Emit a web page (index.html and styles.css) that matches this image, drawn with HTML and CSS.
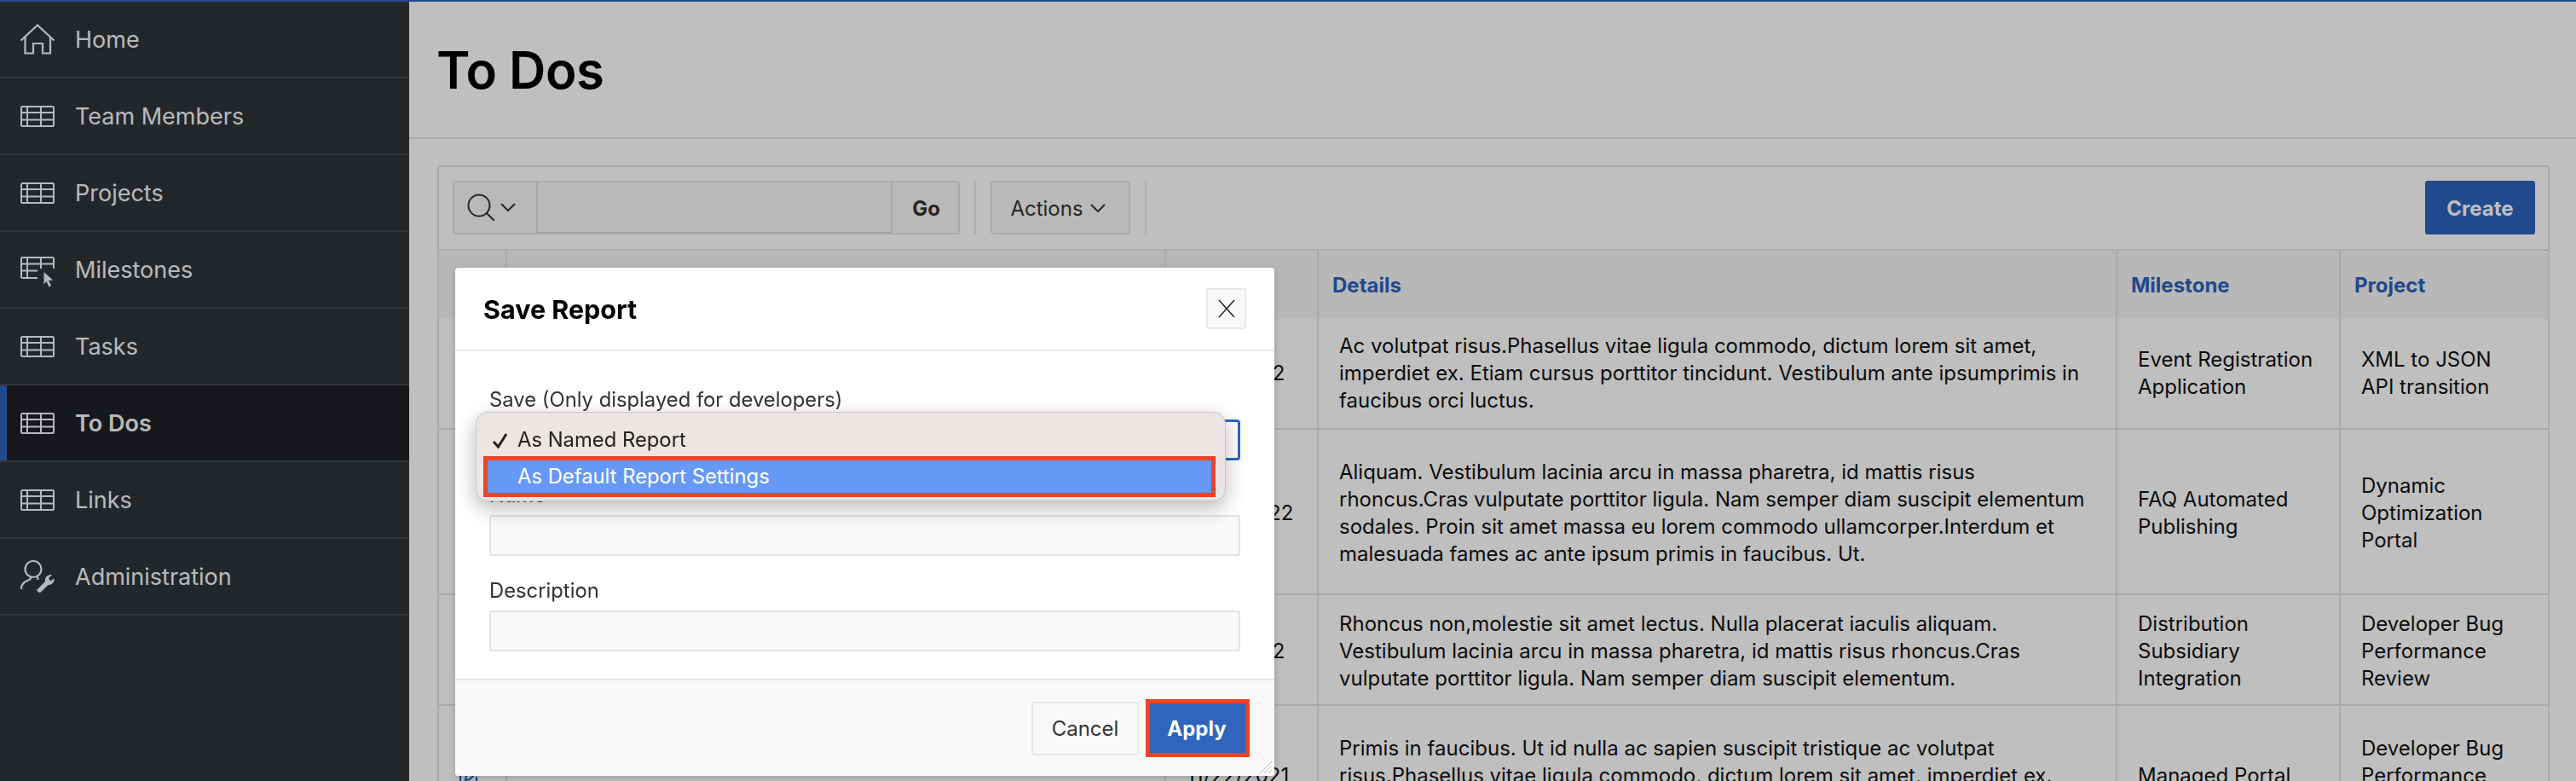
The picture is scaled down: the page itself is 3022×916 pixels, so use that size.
FILE: index.html
```html
<!DOCTYPE html>
<html lang="en">

<head>
    <meta charset="UTF-8">
    <meta name="viewport" content="width=device-width, initial-scale=1.0">
    <link rel="stylesheet" href="styles.css">
    <title>To Dos</title>
</head>

<body>
    <svg class="icon-defs" width="0" height="0">
        <symbol id="i-table" viewBox="0 0 40 25">
            <rect x="1" y="1" width="38" height="23" rx="1.500" fill="none" stroke="currentColor" stroke-width="2"/>
            <path d="M1 8H39M1 16.500H39M8 1V24M24 1V24" fill="none" stroke="currentColor" stroke-width="2"/>
        </symbol>
    </svg>

    <div class="page">
        <nav class="side">
            <a class="nav-item">
                <svg class="nav-icon" viewBox="0 0 40 36"><path d="M0.500 19.500L20 1.500L39.500 19.500M5.500 15V34.500H15V23H26V34.500H35V15" fill="none" stroke="currentColor" stroke-width="2.200"/></svg>
                <span>Home</span>
            </a>
            <a class="nav-item"><svg class="nav-icon tbl"><use href="#i-table"/></svg><span>Team Members</span></a>
            <a class="nav-item"><svg class="nav-icon tbl"><use href="#i-table"/></svg><span>Projects</span></a>
            <a class="nav-item">
                <svg class="nav-icon" viewBox="0 -3 40 36">
                    <path d="M20 25H2.500Q1 25 1 23.500V2.500Q1 1 2.500 1H37.500Q39 1 39 2.500V14M1 8.500H39M1 16.500H20M8 1V25M24 1V14" fill="none" stroke="currentColor" stroke-width="2"/>
                    <path d="M27.500 18L38 27.500L33 28L36 34L33.500 35.500L30.500 29L27.500 32.500Z" fill="currentColor"/>
                </svg>
                <span>Milestones</span>
            </a>
            <a class="nav-item"><svg class="nav-icon tbl"><use href="#i-table"/></svg><span>Tasks</span></a>
            <a class="nav-item active"><svg class="nav-icon tbl"><use href="#i-table"/></svg><span>To Dos</span></a>
            <a class="nav-item"><svg class="nav-icon tbl"><use href="#i-table"/></svg><span>Links</span></a>
            <a class="nav-item">
                <svg class="nav-icon admin" viewBox="0 0 40 38">
                    <circle cx="15" cy="10.500" r="9.500" fill="none" stroke="currentColor" stroke-width="2.200"/>
                    <path d="M12 19.500V21.500C10 25 1 24 1 34M20 19.500L20.500 23" fill="none" stroke="currentColor" stroke-width="2.200"/>
                    <path d="M20 34L29 25C28 21 31 17 36 17L37 17.500L33 21L35 24.500L39.500 21.500C40.500 26 36 29.500 32.500 29L24 37.500C22 39 18 36 20 34Z" fill="currentColor"/>
                </svg>
                <span>Administration</span>
            </a>
        </nav>

        <main class="content">
            <h1 class="page-title">To Dos</h1>
            <div class="body-wrap">
                <section class="report">
                    <div class="toolbar">
                        <div class="search-group">
                            <span class="search-btn">
                                <svg class="search-icon" viewBox="0 0 32 32"><circle cx="14" cy="14" r="12.500" fill="none" stroke="currentColor" stroke-width="2"/><path d="M23 23L32 32" stroke="currentColor" stroke-width="2"/></svg>
                                <svg class="chev" viewBox="0 0 18 10"><path d="M1 1L9 9L17 1" fill="none" stroke="currentColor" stroke-width="2"/></svg>
                            </span>
                            <span class="search-input"></span>
                            <span class="go-btn">Go</span>
                        </div>
                        <span class="tool-sep"></span>
                        <span class="actions-btn">Actions <svg class="chev" viewBox="0 0 18 10"><path d="M1 1L9 9L17 1" fill="none" stroke="currentColor" stroke-width="2"/></svg></span>
                        <span class="tool-sep"></span>
                        <span class="create-btn">Create</span>
                    </div>

                    <table class="grid">
                        <colgroup>
                            <col class="c-edit"><col class="c-title"><col class="c-date"><col class="c-details"><col class="c-mile"><col class="c-proj">
                        </colgroup>
                        <thead>
                            <tr>
                                <th></th>
                                <th>Title</th>
                                <th>Due</th>
                                <th>Details</th>
                                <th>Milestone</th>
                                <th>Project</th>
                            </tr>
                        </thead>
                        <tbody>
                            <tr class="r1">
                                <td></td>
                                <td></td>
                                <td>1/22/2022</td>
                                <td>Ac volutpat risus.Phasellus vitae ligula commodo, dictum lorem sit amet, imperdiet ex. Etiam cursus porttitor tincidunt. Vestibulum ante ipsumprimis in faucibus orci luctus.</td>
                                <td>Event Registration Application</td>
                                <td>XML to JSON API transition</td>
                            </tr>
                            <tr class="r2">
                                <td></td>
                                <td></td>
                                <td>11/29/2022</td>
                                <td>Aliquam. Vestibulum lacinia arcu in massa pharetra, id mattis risus rhoncus.Cras vulputate porttitor ligula. Nam semper diam suscipit elementum sodales. Proin sit amet massa eu lorem commodo ullamcorper.Interdum et malesuada fames ac ante ipsum primis in faucibus. Ut.</td>
                                <td>FAQ Automated Publishing</td>
                                <td>Dynamic Optimization Portal</td>
                            </tr>
                            <tr class="r3">
                                <td></td>
                                <td></td>
                                <td>1/22/2022</td>
                                <td>Rhoncus non,molestie sit amet lectus. Nulla placerat iaculis aliquam. Vestibulum lacinia arcu in massa pharetra, id mattis risus rhoncus.Cras vulputate porttitor ligula. Nam semper diam suscipit elementum.</td>
                                <td>Distribution Subsidiary Integration</td>
                                <td>Developer Bug Performance Review</td>
                            </tr>
                            <tr class="r4">
                                <td class="edit-cell"><svg class="edit-icon" viewBox="0 0 24 24"><path d="M20 13V23H1V4H11M7 17L8 12L19 1L23 5L12 16Z" fill="none" stroke="currentColor" stroke-width="2.200"/></svg></td>
                                <td></td>
                                <td>11/22/2021</td>
                                <td>Primis in faucibus. Ut id nulla ac sapien suscipit tristique ac volutpat risus.Phasellus vitae ligula commodo, dictum lorem sit amet, imperdiet ex. Etiam cursus porttitor tincidunt.</td>
                                <td>Managed Portal</td>
                                <td>Developer Bug Performance Review</td>
                            </tr>
                        </tbody>
                    </table>
                </section>
            </div>
        </main>
    </div>

    <div class="overlay"></div>

    <div class="dialog">
        <div class="dialog-head">
            <h2>Save Report</h2>
            <span class="close-btn"><svg viewBox="0 0 22 22"><path d="M2 1L20 21M20 1L2 21" stroke="currentColor" stroke-width="1.500"/></svg></span>
        </div>
        <div class="dialog-body">
            <div class="field field-save">
                <label>Save (Only displayed for developers)</label>
                <div class="fake-select"></div>
            </div>
            <div class="field">
                <label>Name</label>
                <div class="fake-input"></div>
            </div>
            <div class="field">
                <label>Description</label>
                <div class="fake-input"></div>
            </div>
        </div>
        <div class="dialog-foot">
            <span class="cancel-btn">Cancel</span>
            <span class="apply-btn">Apply</span>
            <svg class="grip" viewBox="0 0 16 16"><path d="M1 15L15 1M6 15L15 6M11 15L15 11" stroke="#bbb" stroke-width="1"/></svg>
        </div>
        <div class="popup">
            <div class="popup-row"><svg class="check" viewBox="0 0 20 20"><path d="M2 11L7.500 17L17 2" fill="none" stroke="currentColor" stroke-width="3"/></svg>As Named Report</div>
            <div class="popup-row picked">As Default Report Settings</div>
        </div>
    </div>
</body>

</html>
```
FILE: styles.css
```css
* {
    box-sizing: border-box;
}

html,
body {
    margin: 0;
    height: 100%;
    overflow: hidden;
}

body {
    font-family: Inter, "Liberation Sans", sans-serif;
    color: #111;
    background: #fff;
}

.icon-defs {
    position: absolute;
}

.page {
    display: flex;
    height: 916px;
    overflow: hidden;
    border-top: 2px solid #2c62bd;
}

/* side menu */
.side {
    width: 480px;
    flex: none;
    background: #303539;
}

.nav-item {
    display: flex;
    align-items: center;
    height: 90px;
    padding-left: 24px;
    border-bottom: 2px solid #44494d;
    color: #f6f7f8;
    font-size: 27px;
}

.nav-item.active {
    background: #1f2125;
    box-shadow: inset 8px 0 0 #2c62bd;
    font-weight: 600;
}

.nav-icon {
    width: 40px;
    height: 36px;
    margin-right: 24px;
    flex: none;
    overflow: visible;
}

.nav-icon.tbl {
    height: 25px;
}

.nav-icon.admin {
    height: 38px;
}

/* main area */
.content {
    flex: 1;
    min-width: 0;
    overflow: hidden;
}

.page-title {
    margin: 0;
    height: 161px;
    padding: 44px 0 0 32px;
    font-size: 60px;
    line-height: 72px;
    font-weight: 600;
    letter-spacing: -0.5px;
    border-bottom: 2px solid #e6e6e6;
    color: #000;
}

.body-wrap {
    padding: 31px 31px 0 33px;
}

.report {
    border: 2px solid #e3e3e3;
    border-bottom: none;
    border-radius: 3px 3px 0 0;
}

.toolbar {
    display: flex;
    align-items: center;
    height: 98px;
    padding: 16px 15px 18px 16px;
    border-bottom: 2px solid #e3e3e3;
}

.search-group {
    display: flex;
    width: 595px;
    height: 63px;
    border: 2px solid #e3e3e3;
    border-radius: 4px;
    background: #f7f7f7;
}

.search-btn {
    display: flex;
    align-items: center;
    gap: 7px;
    width: 96px;
    padding-left: 15px;
    color: #333;
}

.search-icon {
    width: 32px;
    height: 32px;
    flex: none;
}

.chev {
    width: 18px;
    height: 10px;
    flex: none;
}

.search-input {
    width: 418px;
    border-left: 2px solid #ddd;
    border-right: 2px solid #ddd;
    border-bottom: 1px solid #d4d4d4;
}

.go-btn {
    flex: 1;
    display: flex;
    align-items: center;
    justify-content: center;
    padding: 2px 0 0 2px;
    font-size: 24px;
    font-weight: 700;
    color: #333;
}

.tool-sep {
    width: 2px;
    height: 63px;
    background: #e8e8e8;
    margin: 0 17px;
}

.actions-btn {
    display: flex;
    align-items: center;
    justify-content: center;
    gap: 8px;
    width: 164px;
    height: 63px;
    padding: 2px 6px 0 0;
    border: 2px solid #e3e3e3;
    border-radius: 4px;
    background: #f7f7f7;
    font-size: 24px;
    color: #333;
}

.create-btn {
    display: flex;
    align-items: center;
    justify-content: center;
    width: 129px;
    height: 63px;
    padding-top: 2px;
    margin-left: auto;
    border-radius: 3px;
    background: #2c62bd;
    color: #fff;
    font-size: 24px;
    font-weight: 700;
}

/* report table */
.grid {
    width: 100%;
    border-collapse: collapse;
    table-layout: fixed;
    font-size: 24px;
    line-height: 32px;
}

.c-edit { width: 79px; }
.c-title { width: 773px; }
.c-date { width: 179px; }
.c-details { width: 937px; }
.c-mile { width: 262px; }

.grid th {
    height: 80px;
    padding: 1px 16px 0;
    text-align: left;
    background: #f6f6f6;
    color: #2c62bd;
    font-size: 24px;
    font-weight: 700;
    border-left: 2px solid #e3e3e3;
}

.grid th:first-child,
.grid td:first-child {
    border-left: none;
}

.grid td {
    padding: 16px 24px;
    vertical-align: middle;
    border-left: 2px solid #e3e3e3;
    border-top: 2px solid #e3e3e3;
}

.grid tbody tr:first-child td {
    border-top: none;
}

.r2 {
    height: 194px;
}

.grid .r2 td,
.grid .r3 td {
    padding-top: 18px;
    padding-bottom: 14px;
}

.r4 {
    height: 164px;
}

.edit-cell {
    color: #2c62bd;
}

.edit-icon {
    display: block;
    width: 24px;
    height: 24px;
}

/* dim layer and dialog */
.overlay {
    position: fixed;
    inset: 0;
    background: rgba(0, 0, 0, 0.25);
}

.dialog {
    position: absolute;
    left: 534px;
    top: 314px;
    width: 961px;
    height: 596px;
    display: flex;
    flex-direction: column;
    background: #fff;
    border-radius: 4px;
    box-shadow: 0 2px 8px rgba(0, 0, 0, 0.2);
}

.dialog-head {
    display: flex;
    align-items: center;
    justify-content: space-between;
    height: 98px;
    padding: 0 33px;
    border-bottom: 2px solid #e6e6e6;
}

.dialog-head h2 {
    margin: 0;
    font-size: 30.5px;
    font-weight: 700;
    color: #000;
}

.close-btn {
    display: flex;
    align-items: center;
    justify-content: center;
    width: 47px;
    height: 48px;
    border: 2px solid #e8e8e8;
    border-radius: 3px;
    background: #f9f9f9;
    color: #222;
}

.close-btn svg {
    width: 22px;
    height: 22px;
}

.dialog-body {
    flex: 1;
    padding: 41px 40px 0;
}

.field {
    margin-bottom: 25px;
}

.field label {
    display: block;
    height: 39px;
    font-size: 23.8px;
    line-height: 32px;
    color: #333;
}

.fake-select {
    height: 48px;
    border: 3px solid #2f65bd;
    border-radius: 4px;
}

.fake-input {
    height: 48px;
    border: 2px solid #e3e3e3;
    border-radius: 3px;
    background: #f9f9f9;
}

.dialog-foot {
    position: relative;
    display: flex;
    align-items: center;
    justify-content: flex-end;
    gap: 8px;
    height: 114px;
    padding-right: 29px;
    border-top: 2px solid #e6e6e6;
    background: #f9f9f9;
    border-radius: 0 0 4px 4px;
}

.cancel-btn {
    display: flex;
    align-items: center;
    justify-content: center;
    width: 126px;
    height: 63px;
    border: 2px solid #e8e8e8;
    border-radius: 3px;
    font-size: 24px;
    color: #333;
}

.apply-btn {
    display: flex;
    align-items: center;
    justify-content: center;
    width: 122px;
    height: 68px;
    padding-right: 2px;
    border: 5px solid #ee4325;
    background: #2f65bd;
    color: #fff;
    font-size: 24px;
    font-weight: 700;
}

.grip {
    position: absolute;
    right: 2px;
    bottom: 2px;
    width: 16px;
    height: 16px;
}

/* native select menu that is open over the dialog */
.popup {
    position: absolute;
    left: 24px;
    top: 169px;
    width: 880px;
    height: 105px;
    padding: 13px 11px 0 8px;
    background: #ebe6e3;
    border: 1px solid #c9c6c4;
    border-radius: 14px;
    box-shadow: 0 8px 24px rgba(0, 0, 0, 0.28);
    font-size: 23.8px;
}

.popup-row {
    position: relative;
    height: 38px;
    padding-left: 40px;
    line-height: 37px;
    color: #222;
}

.popup-row.picked {
    height: 48px;
    line-height: 38px;
    background: #6699f7;
    border: 5px solid #ee4325;
    padding-left: 35px;
    color: #fff;
}

.check {
    position: absolute;
    left: 10px;
    top: 10px;
    width: 20px;
    height: 20px;
}
```
